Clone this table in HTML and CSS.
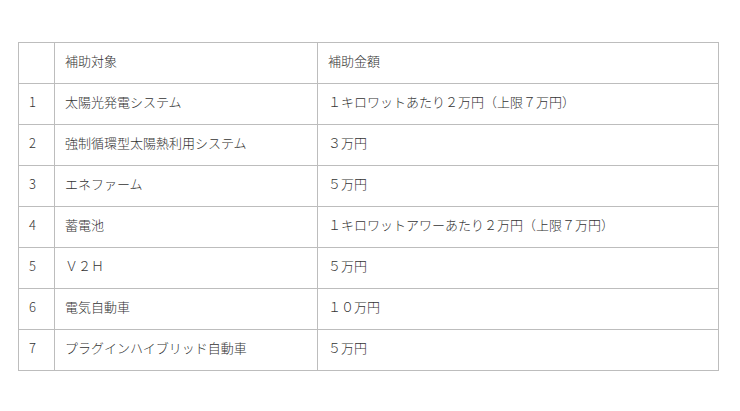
FILE: index.html
```html
<!DOCTYPE html>
<html lang="ja">
<head>
<meta charset="utf-8">
<link rel="stylesheet" href="styles.css">
</head>
<body>
<table class="subsidy">
  <colgroup>
    <col class="c-no">
    <col class="c-target">
    <col class="c-amount">
  </colgroup>
  <tr><td></td><td>補助対象</td><td>補助金額</td></tr>
  <tr><td>1</td><td>太陽光発電システム</td><td>１キロワットあたり２万円（上限７万円）</td></tr>
  <tr><td>2</td><td>強制循環型太陽熱利用システム</td><td>３万円</td></tr>
  <tr><td>3</td><td>エネファーム</td><td>５万円</td></tr>
  <tr><td>4</td><td>蓄電池</td><td>１キロワットアワーあたり２万円（上限７万円）</td></tr>
  <tr><td>5</td><td>Ｖ２Ｈ</td><td>５万円</td></tr>
  <tr><td>6</td><td>電気自動車</td><td>１０万円</td></tr>
  <tr><td>7</td><td>プラグインハイブリッド自動車</td><td>５万円</td></tr>
</table>
</body>
</html>
```
FILE: styles.css
```css
html, body {
  margin: 0;
  background: #ffffff;
}
body {
  padding: 42px 0 0 18px;
  font-family: "Noto Sans CJK JP", "Noto Sans", sans-serif;
  font-size: 13px;
  font-weight: 300;
  color: #333333;
}
.subsidy {
  border-collapse: collapse;
  width: 700px;
  table-layout: fixed;
}
.c-no { width: 36px; }
.c-target { width: 263px; }
.c-amount { width: 401px; }
.subsidy tr { height: 41px; }
.subsidy td {
  border: 1px solid #bdbdbd;
  padding: 0 10px 4px 10px;
  vertical-align: middle;
  line-height: 18px;
  white-space: nowrap;
}
```
